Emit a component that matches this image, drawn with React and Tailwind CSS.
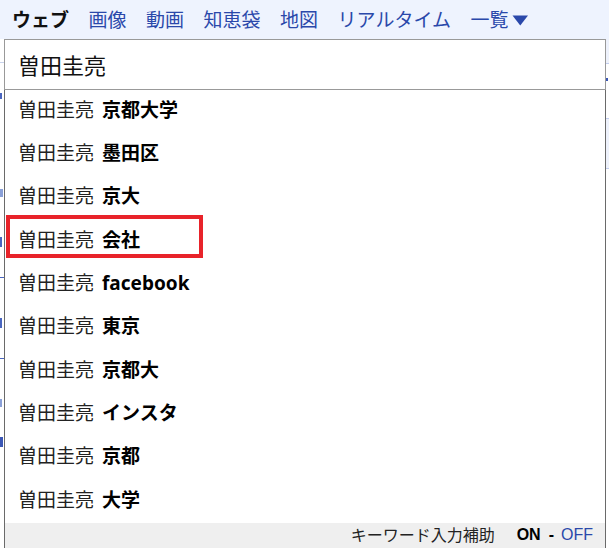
const suggestions = [
  "京都大学",
  "墨田区",
  "京大",
  "会社",
  "facebook",
  "東京",
  "京都大",
  "インスタ",
  "京都",
  "大学",
];

const tabs = ["画像", "動画", "知恵袋", "地図", "リアルタイム"];

function LeftEdge() {
  // bits of the page behind the dropdown
  return (
    <div className="w-[4px] flex flex-col">
      <div className="h-[23px]" />
      <div className="h-[1px] bg-[#c9d3ec]" />
      <div className="h-[30px]" />
      <div className="h-[6px] w-[2px] bg-[#4a66c0]" />
      <div className="h-[90px]" />
      <div className="h-[8px] w-[3px] bg-[#8aa0d8]" />
      <div className="h-[40px]" />
      <div className="h-[10px] w-[2px] bg-[#4a66c0]" />
      <div className="h-[30px]" />
      <div className="h-[1px] bg-[#4a66c0]" />
      <div className="h-[40px]" />
      <div className="h-[10px] w-[2px] bg-[#4a66c0]" />
      <div className="h-[30px]" />
      <div className="h-[1px] bg-[#4a66c0]" />
      <div className="h-[40px]" />
      <div className="h-[8px] w-[2px] bg-[#8aa0d8]" />
      <div className="h-[30px]" />
      <div className="h-[10px] w-[3px] bg-[#3b57b5]" />
    </div>
  );
}

function RightEdge() {
  return (
    <div className="w-[3px] flex flex-col">
      <div className="h-[25px] bg-[#eef2fc] border-b border-[#c2cdee]" />
      <div className="h-[14px]" />
      <div className="h-[3px] w-[2px] bg-[#3b57b5]" />
      <div className="h-[37px]" />
      <div className="h-[51px] bg-[#eef2fc] border-t border-b border-[#c2cdee]" />
    </div>
  );
}

export default function App() {
  return (
    <div
      className="relative w-[609px] h-[548px] overflow-hidden bg-white"
      style={{ fontFamily: '"Noto Sans", "Noto Sans CJK JP", sans-serif' }}
    >
      <nav className="h-[39px] bg-[#eef3fe] flex items-center pl-[12px] pt-[2px] gap-[19.5px] text-[19px] leading-none">
        <span className="font-bold text-[#111]">ウェブ</span>
        {tabs.map(t => (
          <span key={t} className="text-[#2a48aa]">{t}</span>
        ))}
        <span className="text-[#2a48aa] flex items-center gap-[3px]">
          一覧
          <svg width="17" height="11" viewBox="0 0 17 11">
            <path d="M0.5 0.5 H16 L8.25 10.5 Z" fill="#2a48aa" />
          </svg>
        </span>
      </nav>

      <div className="flex">
        <LeftEdge />
        <div className="w-[602px] flex flex-col">
          <div className="h-[51px] border border-[#999] flex items-center pl-[13px] pt-[2px] text-[22px] text-[#111]">
            曽田圭亮
          </div>
          <div className="border-l border-r border-[#6a6a6a] flex flex-col">
            {suggestions.map(s => (
              <div key={s} className="h-[43.3px] flex items-center pl-[13px] pb-[3px] text-[19px] text-[#222]">
                <span>曽田圭亮</span>
                <span className="ml-[8px] font-bold text-black">{s}</span>
              </div>
            ))}
            <div className="h-[30px] bg-[#efefef] flex items-start justify-end pr-[12px] text-[16px]">
              <span className="text-[#222]">キーワード入力補助</span>
              <span
                className="ml-[22px] font-bold text-black"
                style={{ fontFamily: '"Liberation Sans", sans-serif' }}
              >
                ON
              </span>
              <span
                className="ml-[8px] font-bold text-black"
                style={{ fontFamily: '"Liberation Sans", sans-serif' }}
              >
                -
              </span>
              <span
                className="ml-[7px] text-[#2a48aa]"
                style={{ fontFamily: '"Liberation Sans", sans-serif' }}
              >
                OFF
              </span>
            </div>
          </div>
        </div>
        <RightEdge />
      </div>

      <div className="absolute left-[6px] top-[215px] w-[197px] h-[43px] border-[4px] border-[#e8232a]" />
    </div>
  );
}
